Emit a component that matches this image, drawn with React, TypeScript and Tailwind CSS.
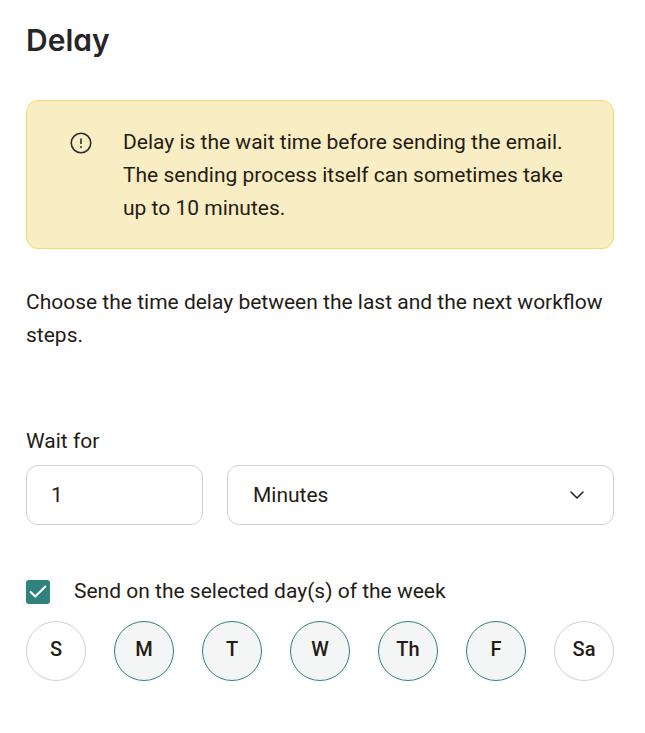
import { Check, ChevronDown } from "lucide-react";

const days = [
  { label: "S", active: false },
  { label: "M", active: true },
  { label: "T", active: true },
  { label: "W", active: true },
  { label: "Th", active: true },
  { label: "F", active: true },
  { label: "Sa", active: false },
];

function InfoIcon() {
  return (
    <svg width="22" height="22" viewBox="0 0 22 22" fill="none" stroke="#2b2b2b" className="shrink-0">
      <circle cx="11" cy="11" r="9.75" strokeWidth="1.6" />
      <path d="M11 6.5v5.5" strokeWidth="1.6" />
      <circle cx="11" cy="15" r="1" fill="#2b2b2b" stroke="none" />
    </svg>
  );
}

export default function App() {
  return (
    <div className="w-[645px] h-[733px] bg-white pl-[26px] pr-[31px] text-[21px] leading-[33px] text-[#241c15] font-['Roboto',sans-serif]">
      <h1 className="pt-[20px] h-[100px] text-[30px] leading-[40px] font-semibold text-[#262626] [font-feature-settings:'cv11'] font-['Inter',sans-serif]">Delay</h1>

      <div className="h-[149px] rounded-[12px] border border-[#fbd965] bg-[#f9edc3] pl-[43px] pr-[20px] pt-[25px] flex">
        <div className="w-[53px] pt-[6px] shrink-0">
          <InfoIcon />
        </div>
        <p>
          Delay is the wait time before sending the email.
          <br />
          The sending process itself can sometimes take
          <br />
          up to 10 minutes.
        </p>
      </div>

      <p className="mt-[37px]">Choose the time delay between the last and the next workflow steps.</p>

      <label className="block mt-[73px] h-[33px]">Wait for</label>
      <div className="mt-[7px] flex gap-[24px]">
        <div className="w-[177px] h-[60px] rounded-[12px] border border-[#ccd2d2] pl-[24px] flex items-center">1</div>
        <div className="flex-1 h-[60px] rounded-[12px] border border-[#ccd2d2] pl-[25px] pr-[24px] flex items-center justify-between">
          <span>Minutes</span>
          <ChevronDown size={24} strokeWidth={1.5} color="#241c15" />
        </div>
      </div>

      <div className="mt-[50px] flex items-center h-[33px]">
        <span className="w-[24px] h-[24px] rounded-[3px] bg-[#2f827d] flex items-center justify-center">
          <Check size={22} strokeWidth={2.25} color="white" />
        </span>
        <span className="ml-[24px]">Send on the selected day(s) of the week</span>
      </div>

      <div className="mt-[13px] flex justify-between">
        {days.map((d) => (
          <div
            key={d.label}
            className={
              d.active
                ? "w-[60px] h-[60px] rounded-full border border-[#2f827d] bg-[#f4f6f5] flex items-center justify-center text-[20px] font-medium pb-[3px]"
                : "w-[60px] h-[60px] rounded-full border border-[#ccd2d2] bg-white flex items-center justify-center text-[20px] font-medium pb-[3px]"
            }
          >
            {d.label}
          </div>
        ))}
      </div>
    </div>
  );
}
